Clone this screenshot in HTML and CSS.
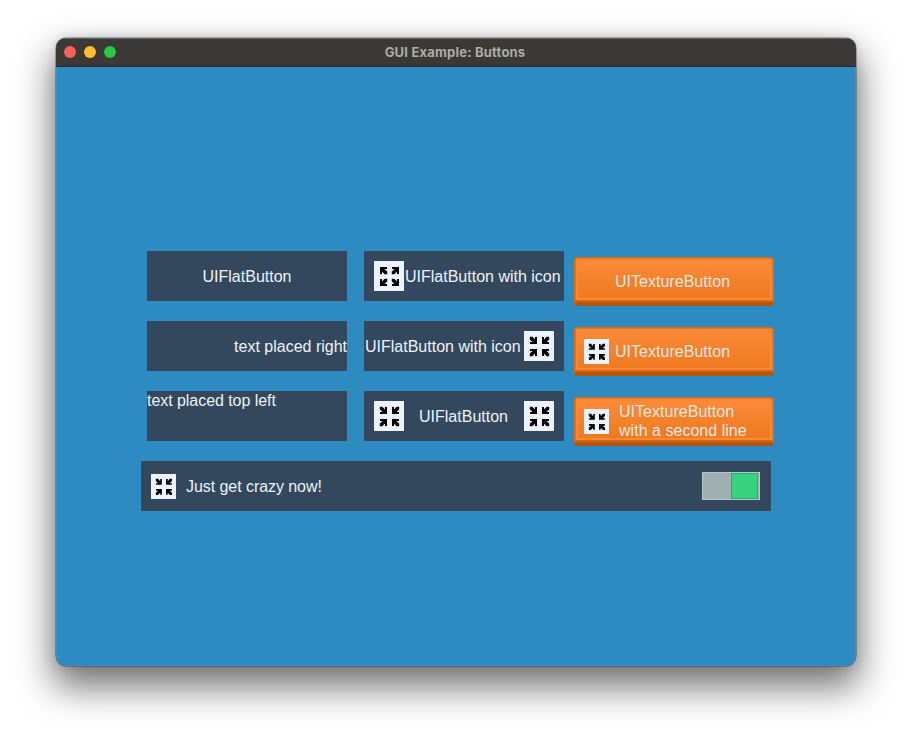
FILE: index.html
```html
<!DOCTYPE html>
<html lang="en">
<head>
<meta charset="utf-8">
<title>GUI Example: Buttons</title>
<link rel="stylesheet" href="styles.css">
</head>
<body>
<svg class="defs" aria-hidden="true">
  <defs>
    <path id="arrow" d="M6 6H13V8H10.4L13.2 10.6V13.2H10.6L8 10.4V13H6Z"/>
    <symbol id="expand" viewBox="0 0 30 30">
      <use href="#arrow"/>
      <use href="#arrow" transform="translate(31 0) scale(-1 1)"/>
      <use href="#arrow" transform="translate(0 31) scale(1 -1)"/>
      <use href="#arrow" transform="translate(31 31) scale(-1 -1)"/>
    </symbol>
    <symbol id="collapse" viewBox="0 0 30 30">
      <use href="#arrow" transform="translate(19 19) scale(-1 -1)"/>
      <use href="#arrow" transform="translate(12 19) scale(1 -1)"/>
      <use href="#arrow" transform="translate(19 12) scale(-1 1)"/>
      <use href="#arrow" transform="translate(12 12)"/>
    </symbol>
  </defs>
</svg>
<main class="window">
  <header class="titlebar">
    <div class="lights"><i class="red"></i><i class="yellow"></i><i class="green"></i></div>
    <h1>GUI Example: Buttons</h1>
  </header>
  <section class="content">
    <div class="grid">
      <button class="flat">UIFlatButton</button>
      <button class="flat icon-start"><svg class="icon"><use href="#expand"/></svg><span>UIFlatButton with icon</span></button>
      <button class="texture"><span>UITextureButton</span></button>
      <button class="flat right">text placed right</button>
      <button class="flat icon-end"><span>UIFlatButton with icon</span><svg class="icon"><use href="#collapse"/></svg></button>
      <button class="texture"><svg class="icon small"><use href="#collapse"/></svg><span>UITextureButton</span></button>
      <button class="flat top-left">text placed top left</button>
      <button class="flat icon-both"><svg class="icon"><use href="#collapse"/></svg><span>UIFlatButton</span><svg class="icon"><use href="#collapse"/></svg></button>
      <button class="texture two-line"><svg class="icon small"><use href="#collapse"/></svg><span>UITextureButton<br>with a second line</span></button>
    </div>
    <div class="wide">
      <svg class="icon small"><use href="#collapse"/></svg>
      <span>Just get crazy now!</span>
      <div class="toggle"><i></i></div>
    </div>
  </section>
</main>
</body>
</html>
```
FILE: styles.css
```css
* { box-sizing: border-box; }
body {
  margin: 0;
  height: 740px;
  overflow: hidden;
  background: #fff;
  font: 16px/19px "Liberation Sans", Arial, sans-serif;
}
.defs { display: none; }
.window {
  width: 800px;
  height: 628px;
  margin: 38px 0 0 56px;
  border-radius: 10px;
  overflow: hidden;
  background: #2e8bc2;
  box-shadow: 0 0 0 .5px rgba(0, 0, 0, .5), 0 18px 36px 3px rgba(0, 0, 0, .55), 0 0 12px rgba(0, 0, 0, .12);
}
.titlebar {
  display: grid;
  grid-template-columns: 70px 1fr 72px;
  align-items: center;
  height: 29px;
  padding-bottom: 1px;
  background: #3b3935;
  border-top: 1px solid #666562;
  border-bottom: 1px solid #24313a;
}
.titlebar h1 {
  margin: 0;
  text-align: center;
  font: bold 13px/16px Inter, sans-serif;
  letter-spacing: .2px;
  color: #aeaba8;
}
.lights { display: flex; gap: 8px; padding-left: 8px; }
.lights i { width: 12px; height: 12px; border-radius: 50%; }
.red { background: #ff5f57; }
.yellow { background: #febc2e; }
.green { background: #28c840; }
.content {
  height: 599px;
  padding: 184px 0 0 84px;
  border: solid #3a94cc;
  border-width: 0 1px 1px;
  border-radius: 0 0 10px 10px;
}
.grid {
  display: grid;
  grid-template-columns: 200px 200px 200px;
  grid-auto-rows: 50px;
  column-gap: 17px;
  row-gap: 20px;
  margin-left: 6px;
}
button {
  display: flex;
  align-items: center;
  border: 0;
  margin: 0;
  padding: 0;
  font: inherit;
  color: #ecf3fa;
  white-space: nowrap;
}
.flat { justify-content: center; background: #33485c; }
.icon { width: 30px; height: 30px; flex: none; background: #ecf3fc; }
.small { width: 25px; height: 25px; }
.icon-start { justify-content: flex-start; padding-left: 10px; }
.icon-start span { margin-left: 1px; }
.icon-end { justify-content: space-between; padding: 0 10px 0 1px; }
.icon-both { justify-content: space-between; padding: 0 10px; }
.icon-both span { margin-right: 1px; }
.right { justify-content: flex-end; }
.top-left { justify-content: flex-start; align-items: flex-start; letter-spacing: -.05px; }
.texture {
  width: 200px;
  height: 49px;
  margin: 6px 0 0 -7px;
  padding: 0 10px 0 9px;
  border: solid #de6b16;
  border-width: 1px 1px 4px;
  border-bottom-color: #b4560c;
  border-radius: 4px;
  background: linear-gradient(#fb8c3a, #ec781c) padding-box, #b4560c;
  box-shadow: inset 0 -1px 0 #d46613, inset 0 0 0 1px #e87422, inset 0 -2px 0 #d46613, inset 0 0 0 3px #fa8835, inset 0 -4px 0 #fa8835;
  text-align: left;
  letter-spacing: .03px;
  color: #e8e6e6;
}
.texture > span:only-child { margin: 2px auto 0; padding-right: 2px; }
.texture .icon + span { margin-left: 6px; }
.texture.two-line .icon + span { margin: 2px 0 0 10px; }
.texture .icon { margin-top: 3px; }
.texture span { margin-top: 3px; }
.wide {
  display: flex;
  align-items: center;
  width: 630px;
  height: 50px;
  margin-top: 20px;
  padding: 0 11px 0 10px;
  background: #33485c;
  color: #ecf3fa;
  letter-spacing: -.06px;
}
.wide span { margin-left: 10px; }
.toggle {
  display: flex;
  justify-content: flex-end;
  width: 58px;
  height: 28px;
  margin-left: auto;
  padding: 0 1px 0 0;
  border: 1px solid #b9c5c7;
  background: #a0b0b0;
}
.toggle i { width: 27px; border: 1px solid #27ae7a; background: #37d37e; }
```
